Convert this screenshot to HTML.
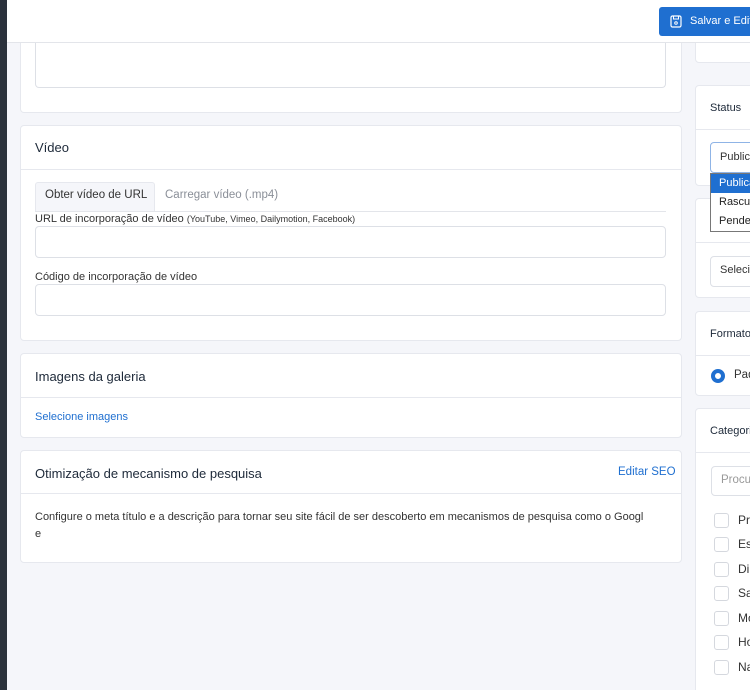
<!DOCTYPE html>
<html style="width:750px;height:690px;overflow:hidden"><head><meta charset="utf-8"><style>
*{box-sizing:border-box;margin:0;padding:0}
body{width:750px;height:690px;overflow:hidden;background:#f5f6fa;font-family:"Liberation Sans",sans-serif;font-size:12px;color:#1d2939;position:relative}
.abs{position:absolute}
.card{position:absolute;background:#fff;border:1px solid #e6e8ee;border-radius:4px}
.hd{position:absolute;left:0;right:0;border-bottom:1px solid #e6e8ee}
.inp{position:absolute;border:1px solid #dde0e6;border-radius:4px;background:#fff}
.t{position:absolute;white-space:nowrap}
.cb{position:absolute;left:714px;width:15px;height:15px;border:1px solid #d5d8de;border-radius:3px;background:#fff}
.ct{position:absolute;left:738px;font-size:12px;color:#333}
</style></head><body>

<div class="card" style="left:20px;top:30px;width:662px;height:83px;border-top:none"></div>
<div class="inp" style="left:35px;top:30px;width:631px;height:58px;border-top:none"></div>

<div class="card" style="left:20px;top:125px;width:662px;height:216px">
<div class="hd" style="top:0;height:44px"></div>
<div class="t" style="left:14px;top:14px;font-size:13px">Vídeo</div>
<div class="abs" style="left:14px;top:56px;width:120px;height:29px;background:#f5f6fa;border:1px solid #e6e8ee;border-bottom:none;border-radius:3px 3px 0 0"></div>
<div class="t" style="left:24px;top:63px;font-size:11.5px;color:#333">Obter vídeo de URL</div>
<div class="t" style="left:144px;top:63px;font-size:11.5px;color:#8a8f98">Carregar vídeo (.mp4)</div>
<div class="abs" style="left:14px;top:85px;width:631px;height:1px;background:#e3e5ea"></div>
<div class="t" style="left:14px;top:87px;font-size:11px;color:#333">URL de incorporação de vídeo <span style="font-size:9px">(YouTube, Vimeo, Dailymotion, Facebook)</span></div>
<div class="inp" style="left:14px;top:100px;width:631px;height:32px"></div>
<div class="t" style="left:14px;top:145px;font-size:11px;color:#333">Código de incorporação de vídeo</div>
<div class="inp" style="left:14px;top:158px;width:631px;height:32px"></div>
</div>

<div class="card" style="left:20px;top:353px;width:662px;height:85px">
<div class="hd" style="top:0;height:44px"></div>
<div class="t" style="left:14px;top:15px;font-size:13px">Imagens da galeria</div>
<div class="t" style="left:14px;top:57px;font-size:11px;color:#1f6fd0">Selecione imagens</div>
</div>

<div class="card" style="left:20px;top:450px;width:662px;height:113px">
<div class="hd" style="top:0;height:43px"></div>
<div class="t" style="left:14px;top:15px;font-size:13px">Otimização de mecanismo de pesquisa</div>
<div class="t" style="left:597px;top:15px;font-size:11.5px;color:#1f6fd0">Editar SEO</div>
<div class="t" style="left:14px;top:58px;font-size:11px;color:#333;line-height:17px">Configure o meta título e a descrição para tornar seu site fácil de ser descoberto em mecanismos de pesquisa como o Googl<br>e</div>
</div>

<!-- right column -->
<div class="card" style="left:695px;top:30px;width:70px;height:33px;border-top:none"></div>
<div class="card" style="left:695px;top:85px;width:70px;height:101px">
<div class="hd" style="top:0;height:44px"></div>
<div class="t" style="left:14px;top:16px;font-size:11px">Status</div>
</div>
<div class="card" style="left:695px;top:198px;width:70px;height:100px">
<div class="hd" style="top:0;height:44px"></div>
</div>
<div class="inp" style="left:710px;top:256px;width:50px;height:31px"></div>
<div class="t" style="left:720px;top:264px;font-size:11px;color:#333">Selecione</div>
<div class="inp" style="left:710px;top:142px;width:50px;height:31px;border-color:#8fb4e6"></div>
<div class="t" style="left:720px;top:151px;font-size:11px;color:#333">Publicado</div>
<div class="abs" style="left:710px;top:173px;width:50px;height:59px;background:#fff;border:1px solid #777"></div>
<div class="abs" style="left:711px;top:174px;width:49px;height:19px;background:#1f6fd0"></div>
<div class="t" style="left:719px;top:177px;font-size:11px;color:#fff">Publicado</div>
<div class="t" style="left:719px;top:196px;font-size:11px;color:#222">Rascunho</div>
<div class="t" style="left:719px;top:215px;font-size:11px;color:#222">Pendente</div>

<div class="card" style="left:695px;top:311px;width:70px;height:85px">
<div class="hd" style="top:0;height:44px"></div>
<div class="t" style="left:14px;top:16px;font-size:11px">Formato</div>
<div class="abs" style="left:15px;top:57px;width:14px;height:14px;border-radius:50%;border:4px solid #1f6fd0;background:#fff"></div>
<div class="t" style="left:38px;top:57px;font-size:11.5px;color:#333">Padrão</div>
</div>
<div class="card" style="left:695px;top:408px;width:70px;height:290px">
<div class="hd" style="top:0;height:44px"></div>
<div class="t" style="left:14px;top:16px;font-size:11px">Categorias</div>
<div class="inp" style="left:15px;top:57px;width:50px;height:30px"></div>
<div class="t" style="left:25px;top:65px;font-size:11.5px;color:#999">Procurar</div>
</div>
<div class="cb" style="top:513px"></div><div class="ct" style="top:513px">Pr</div>
<div class="cb" style="top:537px"></div><div class="ct" style="top:537px">Es</div>
<div class="cb" style="top:562px"></div><div class="ct" style="top:562px">Di</div>
<div class="cb" style="top:586px"></div><div class="ct" style="top:586px">Sa</div>
<div class="cb" style="top:611px"></div><div class="ct" style="top:611px">Mo</div>
<div class="cb" style="top:635px"></div><div class="ct" style="top:635px">Ho</div>
<div class="cb" style="top:660px"></div><div class="ct" style="top:660px">Na</div>

<div class="abs" style="left:0;top:0;width:7px;height:690px;background:#2b323c"></div>
<div class="abs" style="left:7px;top:0;width:743px;height:43px;background:#fff;border-bottom:1px solid #e3e5ea"></div>
<div class="abs" style="left:659px;top:7px;width:100px;height:29px;background:#1f6fd0;border-radius:3px"></div>
<svg class="abs" style="left:670px;top:15px" width="12" height="13" viewBox="0 0 12 13"><rect x="1" y="1" width="10" height="11" rx="1.5" fill="none" stroke="#fff" stroke-width="1.2"/><rect x="3.5" y="1" width="5" height="3" fill="none" stroke="#fff"/><circle cx="6" cy="8" r="1.3" fill="none" stroke="#fff"/></svg>
<div class="t" style="left:690px;top:15px;color:#fff;font-size:11px">Salvar e Editar</div>
</body></html>
